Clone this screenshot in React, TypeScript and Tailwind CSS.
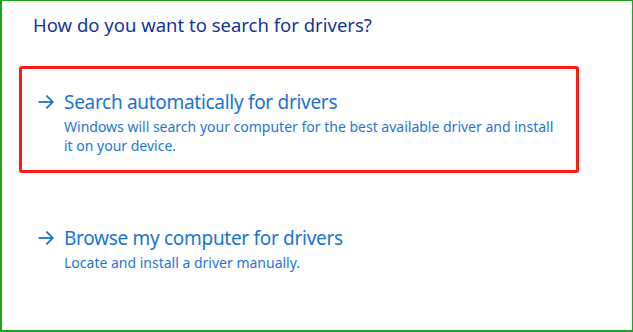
import React from "react"

function Arrow() {
  return (
    <svg viewBox="0 0 16 14" className="w-[16px] h-[14px] shrink-0" fill="none" stroke="currentColor" strokeWidth="1.8">
      <path d="M0.5 7H15" />
      <path d="M8.4 0.6L14.8 7L8.4 13.4" />
    </svg>
  )
}

function Option({ title, desc, boxed }: { title: string; desc: string[]; boxed?: boolean }) {
  return (
    <div
      className={`w-[560px] h-[107px] ml-[17px] rounded-[3px] border-[3px] ${
        boxed ? "border-[#ff1a14]" : "border-transparent"
      } pl-[16px] pt-[20px]`}
    >
      <div className="flex items-center gap-[10px] text-[#1a73d4]">
        <Arrow />
        <span className="text-[19px] leading-[26px] tracking-[-0.3px]">{title}</span>
      </div>
      <div className="pl-[26px] mt-[2px] text-[14px] leading-[19px] text-[#1c76d8]">
        {desc.map((l) => (
          <div key={l}>{l}</div>
        ))}
      </div>
    </div>
  )
}

export default function App() {
  return (
    <div
      className="w-[633px] h-[332px] bg-white border-t border-l-2 border-r border-b-2 border-[#1aa51a] overflow-hidden"
      style={{ fontFamily: '"Noto Sans", "Open Sans", sans-serif' }}
    >
      <div className="pl-[31px] pt-[11px] text-[18.5px] leading-[25px] text-[#15339d]">
        How do you want to search for drivers?
      </div>
      <div className="mt-[29px]">
        <Option
          boxed
          title="Search automatically for drivers"
          desc={[
            "Windows will search your computer for the best available driver and install",
            "it on your device.",
          ]}
        />
      </div>
      <div className="mt-[29px]">
        <Option title="Browse my computer for drivers" desc={["Locate and install a driver manually."]} />
      </div>
    </div>
  )
}
